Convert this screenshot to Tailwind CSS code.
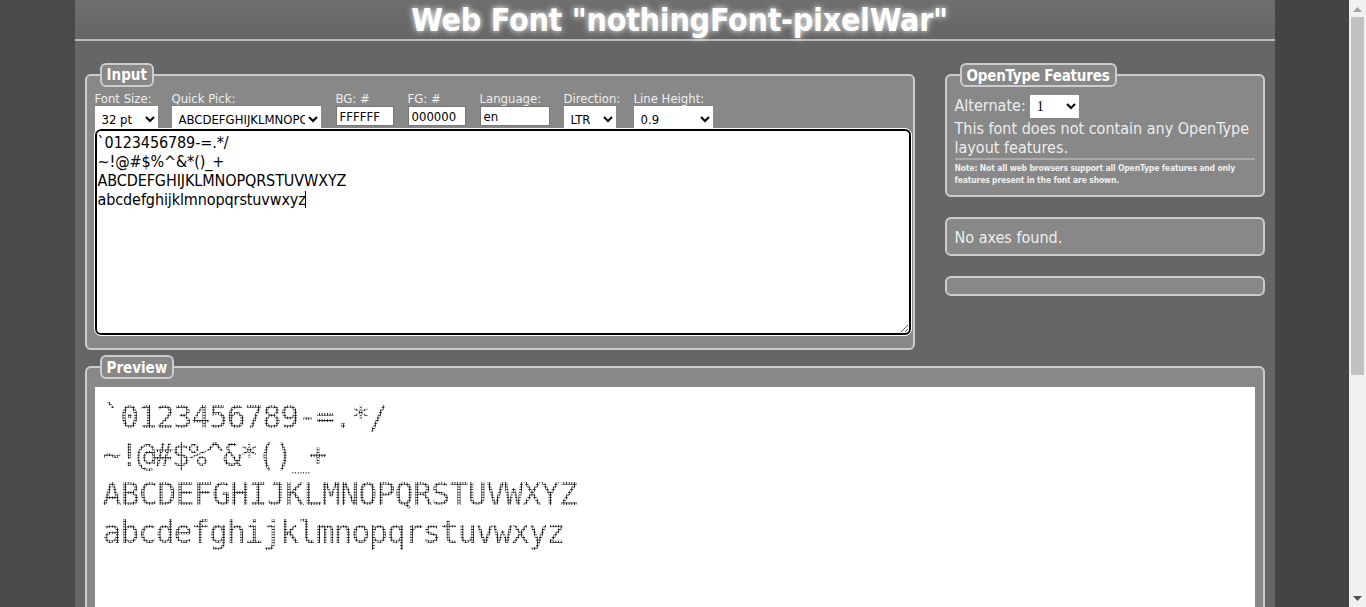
<!DOCTYPE html>
<html lang="en">
<head>
<meta charset="utf-8">
<title>Web Font</title>
<script src="https://cdn.jsdelivr.net/npm/@tailwindcss/browser@4"></script>
</head>
<body class="h-[607px] overflow-hidden bg-[#444] font-['DejaVu_Sans',sans-serif] [font-stretch:condensed]">
<div class="flex h-[607px]">
  <div class="flex-1 flex justify-center overflow-hidden bg-gradient-to-r from-[#4a4a4a] via-[#444] to-[#444]">
    <main class="w-[1200px] shrink-0 h-[607px] bg-[#666] overflow-hidden">
      <header class="h-[41px] border-b-2 border-[#bbb] bg-gradient-to-b from-[#6e6e6e] to-[#666]">
        <h1 class="pl-[10px] text-center text-[32px] leading-[40px] tracking-[-0.3px] font-bold text-white [text-shadow:0_0_6px_#fff]">Web Font "nothingFont-pixelWar"</h1>
      </header>
      <div class="flex justify-between px-[10px] pt-[22px]">
        <fieldset class="w-[830px] h-[287px] border-2 border-[#ccc] rounded-md bg-[#888] pl-2 pr-[2px]">
          <legend class="ml-[5px] px-[5px] h-[24px] border-2 border-[#ccc] rounded-md bg-[#888] text-white font-bold text-[15px] leading-[21px]">Input</legend>
          <div class="flex h-[37px] mt-[5px] text-[#eee] text-[13px] leading-[14px]">
            <label class="w-[77px]">Font Size:<br><select class="mt-0 w-[63px] h-[26px] bg-white text-black text-[13px] pl-[3px]"><option>32 pt</option></select></label>
            <label class="w-[164px]">Quick Pick:<br><select class="mt-0 w-[149px] h-[26px] bg-white text-black text-[13px] pl-[3px]"><option>ABCDEFGHIJKLMNOPQRSTUVWXYZ</option></select></label>
            <label class="w-[72px]">BG: #<br><input value="FFFFFF" class="mt-0 w-[58px] h-[20px] bg-white text-black text-[13px] px-[3px] border border-[#777]"></label>
            <label class="w-[72px]">FG: #<br><input value="000000" class="mt-0 w-[58px] h-[20px] bg-white text-black text-[13px] px-[3px] border border-[#777]"></label>
            <label class="w-[84px]">Language:<br><input value="en" class="mt-0 w-[70px] h-[20px] bg-white text-black text-[13px] px-[3px] border border-[#777]"></label>
            <label class="w-[70px]">Direction:<br><select class="mt-0 w-[52px] h-[26px] bg-white text-black text-[13px] pl-[3px]"><option>LTR</option></select></label>
            <label>Line Height:<br><select class="mt-0 w-[79px] h-[26px] bg-white text-black text-[13px] pl-[3px]"><option>0.9</option></select></label>
          </div>
          <div class="relative w-[816px] h-[206px]">
            <textarea class="block w-[816px] h-[206px] bg-white text-black border-2 border-black rounded-md outline outline-1 outline-white text-[16px] leading-[19px] tracking-[-0.1px] px-[1px] py-[2px] whitespace-pre">`0123456789-=.*/
~!@#$%^&amp;*()_+
ABCDEFGHIJKLMNOPQRSTUVWXYZ
abcdefghijklmnopqrstuvwxyz</textarea>
            <span class="absolute left-[210px] top-[62px] w-px h-[17px] bg-black"></span>
          </div>
        </fieldset>
        <div class="w-[320px] flex flex-col">
          <fieldset class="h-[134px] border-2 border-[#ccc] rounded-md bg-[#888] px-2 text-[#eee]">
            <legend class="ml-[5px] px-[5px] h-[24px] border-2 border-[#ccc] rounded-md bg-[#888] text-white font-bold text-[15px] leading-[22px] tracking-[-0.2px]">OpenType Features</legend>
            <div class="h-[24px] mt-[7px] flex items-center gap-[4px] text-[16px]">Alternate: <select class="w-[49px] h-[23px] bg-white text-black text-[14px] pl-[3px] font-['Liberation_Serif',serif]"><option>1</option></select></div>
            <p class="mt-[1px] text-[16px] leading-[19px]">This font does not contain any OpenType layout features.</p>
            <p class="mt-[1px] pt-[2px] border-t-2 border-[#aaa] text-[8.5px] leading-[12px] tracking-[-0.15px] font-bold">Note: Not all web browsers support all OpenType features and only features present in the font are shown.</p>
          </fieldset>
          <div class="mt-[20px] h-[39px] border-2 border-[#ccc] rounded-md bg-[#888] px-2 text-[#eee] text-[16px] leading-[37px]">No axes found.</div>
          <div class="mt-[20px] h-[20px] border-2 border-[#ccc] rounded-md bg-[#888]"></div>
        </div>
      </div>
      <div class="px-[10px] pt-[5px]">
        <fieldset class="h-[320px] border-2 border-[#ccc] rounded-md bg-[#888] px-2 pt-2">
          <legend class="ml-[5px] px-[5px] h-[24px] border-2 border-[#ccc] rounded-md bg-[#888] text-white font-bold text-[15px] leading-[22px]">Preview</legend>
          <div class="h-[300px] bg-white pt-[11px] pl-[8px]">
            <div class="w-fit bg-clip-text text-transparent bg-[radial-gradient(circle,#000_45%,transparent_58%)] bg-[length:2.67px_2.67px] font-['DejaVu_Sans_Mono',monospace] [font-stretch:normal] text-[31.5px] leading-[38.4px]">
              <div class="whitespace-pre tracking-[-1.2px]">`0123456789-=.*/</div>
              <div class="whitespace-pre tracking-[-1.8px]">~!@#$%^&amp;*()_+</div>
              <div class="whitespace-pre tracking-[-0.7px]">ABCDEFGHIJKLMNOPQRSTUVWXYZ</div>
              <div class="whitespace-pre tracking-[-1.2px]">abcdefghijklmnopqrstuvwxyz</div>
            </div>
          </div>
        </fieldset>
      </div>
    </main>
  </div>
  <div class="w-[17px] h-[607px] bg-[#f1f1f1] flex flex-col items-center relative">
    <svg class="mt-[7px]" width="9" height="5" viewBox="0 0 9 5"><path d="M0 5L4.5 0L9 5Z" fill="#a3a3a3"/></svg>
    <div class="absolute top-[17px] left-[2px] w-[13px] h-[358px] bg-[#c1c1c1]"></div>
    <svg class="absolute bottom-[6px]" width="9" height="5" viewBox="0 0 9 5"><path d="M0 0L9 0L4.5 5Z" fill="#505050"/></svg>
  </div>
</div>
</body>
</html>
